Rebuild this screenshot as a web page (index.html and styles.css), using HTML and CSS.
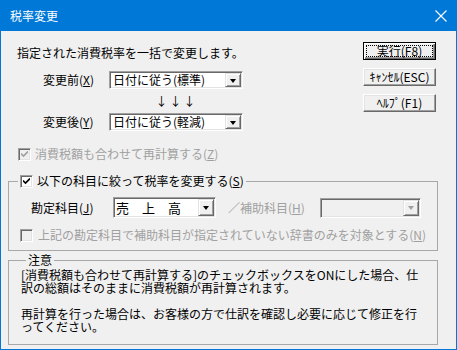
FILE: index.html
```html
<!DOCTYPE html>
<html>
<head>
<meta charset="utf-8">
<title>税率変更</title>
<link rel="stylesheet" href="styles.css">
</head>
<body>
<div class="window">
	<div class="titlebar">
		<span class="title">税率変更</span>
		<svg class="close" width="12" height="12" viewBox="0 0 12 12"><path d="M0.5 0.5L11.5 11.5M11.5 0.5L0.5 11.5" stroke="#fff" stroke-width="1.1" fill="none"/></svg>
	</div>
	<div class="client">
		<div class="top">
			<div class="left">
				<div class="lead">指定された消費税率を一括で変更します。</div>
				<div class="row">
					<span class="label">変更前(<u>X</u>)</span>
					<div class="combo rate"><span class="val">日付に従う(標準)</span><span class="drop"><span class="tri"></span></span></div>
				</div>
				<div class="arrows">↓↓↓</div>
				<div class="row">
					<span class="label">変更後(<u>Y</u>)</span>
					<div class="combo rate"><span class="val">日付に従う(軽減)</span><span class="drop"><span class="tri"></span></span></div>
				</div>
			</div>
			<div class="buttons">
				<div class="btn default"><span class="focus">実行(F8)</span></div>
				<div class="btn">ｷｬﾝｾﾙ(ESC)</div>
				<div class="btn">ﾍﾙﾌﾟ(F1)</div>
			</div>
		</div>

		<div class="check disabled recalc">
			<span class="cb checked"><svg width="7" height="7" viewBox="0 0 7 7"><path d="M0 2.5L2.5 5L7 0.5" stroke="#a0a0a0" stroke-width="1.6" fill="none"/></svg></span>
			<span>消費税額も合わせて再計算する(<u>Z</u>)</span>
		</div>

		<fieldset class="group subject">
			<legend><span class="check">
				<span class="cb checked"><svg width="7" height="7" viewBox="0 0 7 7"><path d="M0 2.5L2.5 5L7 0.5" stroke="#000" stroke-width="1.6" fill="none"/></svg></span>
				<span>以下の科目に絞って税率を変更する(<u>S</u>)</span>
			</span></legend>
			<div class="subjrow">
				<span class="label2">勘定科目(<u>J</u>)</span>
				<div class="combo account"><span class="val">売　上　高</span><span class="drop"><span class="tri"></span></span></div>
				<span class="sublabel">／補助科目(<u>H</u>)</span>
				<div class="combo sub off"><span class="val"></span><span class="drop"><span class="tri"></span></span></div>
			</div>
			<div class="check disabled only">
				<span class="cb"></span>
				<span>上記の勘定科目で補助科目が指定されていない辞書のみを対象とする(<u>N</u>)</span>
			</div>
		</fieldset>

		<fieldset class="group note">
			<legend>注意</legend>
			<p>[消費税額も合わせて再計算する]のチェックボックスをONにした場合、仕<br>訳の総額はそのままに消費税額が再計算されます。</p>
			<p>再計算を行った場合は、お客様の方で仕訳を確認し必要に応じて修正を行<br>ってください。</p>
		</fieldset>
	</div>
</div>
</body>
</html>
```

FILE: styles.css
```css
body {
	margin: 0;
	font-family: "Noto Sans CJK JP", sans-serif;
	font-size: 12px;
	color: #000;
}
.window {
	width: 457px;
	height: 350px;
	box-sizing: border-box;
	border: 1px solid #0078d7;
	background: #f0f0f0;
	display: flex;
	flex-direction: column;
}
.titlebar {
	height: 30px;
	background: #0078d7;
	color: #fff;
	display: flex;
	align-items: center;
	padding: 0 9px;
}
.title {
	flex: 1;
	line-height: 14px;
}
.close {
	margin-right: 0;
}
.client {
	flex: 1;
}
.top {
	display: flex;
}
.left {
	padding-left: 16px;
}
.lead {
	line-height: 14px;
	margin-top: 15px;
}
.row {
	display: flex;
	align-items: center;
	padding-left: 26px;
	margin-top: 11px;
}
.label {
	width: 66px;
	line-height: 14px;
}
.arrows {
	text-align: center;
	padding-left: 92px;
	letter-spacing: 2px;
	line-height: 14px;
	margin-top: 5px;
	margin-bottom: -6px;
}

/* sunken combo box */
.combo {
	display: flex;
	box-sizing: border-box;
	height: 18px;
	border: 1px solid;
	border-color: #a0a0a0 #fff #fff #a0a0a0;
	box-shadow: inset 1px 1px 0 #696969, inset -1px -1px 0 #e3e3e3;
	background: #fff;
	padding: 1px;
}
.combo .val {
	flex: 1;
	padding-left: 2px;
	line-height: 14px;
	white-space: nowrap;
}
.combo .drop {
	width: 16px;
	box-sizing: border-box;
	background: #f0f0f0;
	border: 1px solid;
	border-color: #e3e3e3 #696969 #696969 #e3e3e3;
	box-shadow: inset 1px 1px 0 #fff, inset -1px -1px 0 #a0a0a0;
	display: flex;
	align-items: center;
	justify-content: center;
}
.tri {
	width: 0;
	height: 0;
	border-left: 3.5px solid transparent;
	border-right: 3.5px solid transparent;
	border-top: 4px solid #000;
	margin-top: 1px;
}
.rate {
	width: 134px;
}
.account {
	width: 103px;
	height: 21px;
	font-size: 13px;
}
.account .val {
	line-height: 17px;
	padding-left: 1px;
}
.sub {
	width: 101px;
	height: 20px;
}
.combo.off {
	background: #f0f0f0;
}
.combo.off .tri {
	border-top-color: #a0a0a0;
}

/* push buttons */
.buttons {
	margin-left: auto;
	margin-right: 20px;
	padding-top: 11px;
	display: flex;
	flex-direction: column;
	gap: 7px;
}
.btn {
	width: 73px;
	height: 18px;
	box-sizing: border-box;
	background: #f0f0f0;
	border: 1px solid;
	border-color: #fff #696969 #696969 #fff;
	box-shadow: inset -1px -1px 0 #a0a0a0, inset 1px 1px 0 #e3e3e3;
	display: flex;
	align-items: center;
	justify-content: center;
	line-height: 14px;
	white-space: nowrap;
}
.btn + .btn {
	margin-top: 1px;
}
.btn.default {
	border-color: #000;
	box-shadow: inset 1px 1px 0 #fff, inset -1px -1px 0 #696969, inset -2px -2px 0 #a0a0a0;
	padding: 1px;
}
.btn .focus {
	flex: 1;
	align-self: stretch;
	border: 1px dotted #000;
	display: flex;
	align-items: center;
	justify-content: center;
	margin: 1px;
}

/* check boxes */
.check {
	display: flex;
	align-items: center;
	line-height: 14px;
	white-space: nowrap;
}
.cb {
	width: 13px;
	height: 13px;
	box-sizing: border-box;
	border: 1px solid;
	border-color: #a0a0a0 #fff #fff #a0a0a0;
	box-shadow: inset 1px 1px 0 #696969, inset -1px -1px 0 #e3e3e3;
	background: #fff;
	margin-right: 4px;
	display: flex;
	align-items: center;
	justify-content: center;
}
.check.disabled {
	color: #a0a0a0;
}
.check.disabled .cb {
	background: #f0f0f0;
}
.recalc {
	margin: 16px 0 0 17px;
}
.only {
	margin-top: 10px;
	padding-left: 11px;
}
.only .cb {
	margin-right: 5px;
}

/* group boxes */
.group {
	margin: 0 0 0 7px;
	width: 430px;
	box-sizing: border-box;
	border: 1px solid #a8a8a8;
	padding: 0;
	min-width: 0;
}
.group legend {
	padding: 0 2px;
	line-height: 14px;
}
.subject {
	margin-top: 13px;
	padding-bottom: 8px;
}
.subject legend {
	margin-left: 9px;
}
.subjrow {
	display: flex;
	align-items: center;
	margin-top: 9px;
	padding-left: 22px;
}
.label2 {
	width: 82px;
	line-height: 14px;
}
.sublabel {
	color: #a0a0a0;
	margin-left: 12px;
	width: 92px;
	line-height: 14px;
}
.note {
	margin-top: 2px;
	padding: 1px 0 11px 12px;
}
.note legend {
	margin-left: 5px;
}
.note p {
	margin: 0 0 13px 0;
	line-height: 13px;
	white-space: nowrap;
}
.note p:last-child {
	margin-bottom: 0;
}
```
